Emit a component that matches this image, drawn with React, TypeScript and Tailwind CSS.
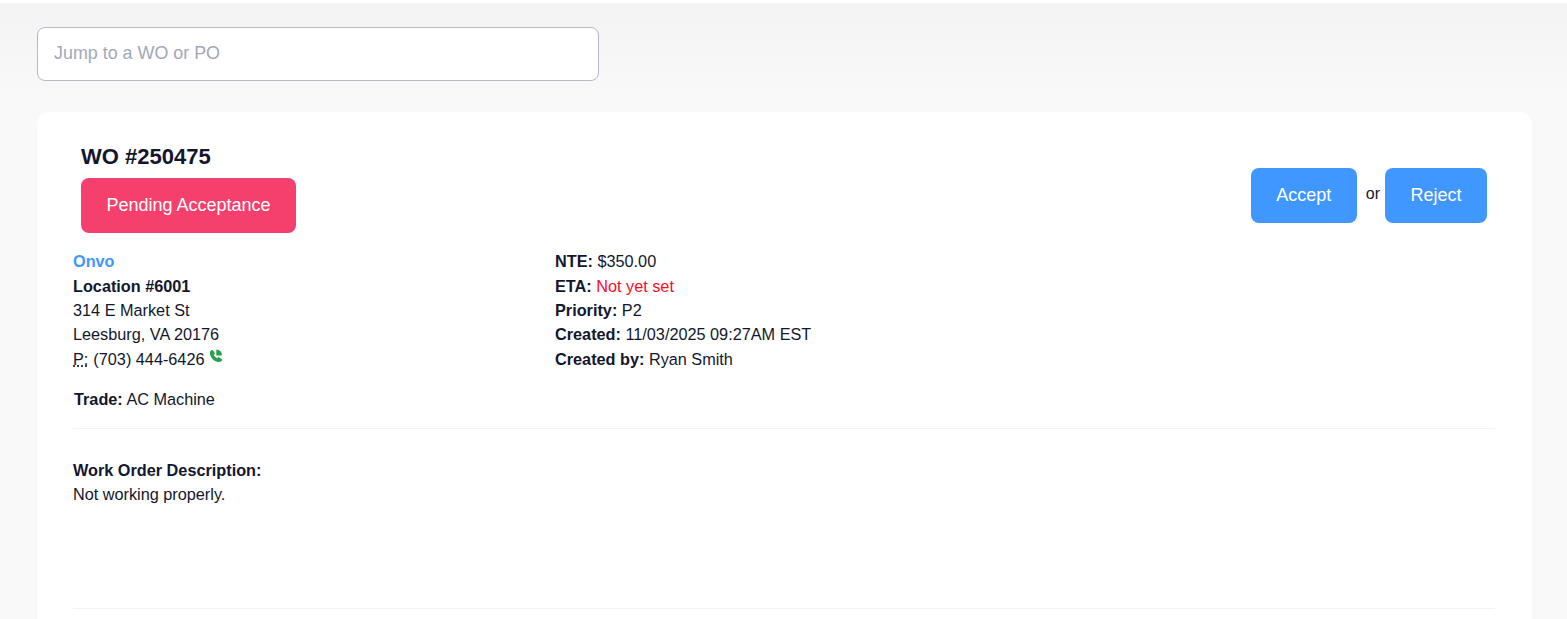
export default function App() {
  return (
    <div className="relative h-[619px] overflow-hidden bg-[#f9f9fa] font-['Liberation_Sans',Arial,sans-serif] text-[16.25px] leading-[24.375px] text-[#12172e]">
      <div className="h-[3px] bg-white" />
      <div className="h-[97px] bg-gradient-to-b from-[#f3f3f4] to-[#f9f9fa] pl-[37px] pt-6">
        <input
          placeholder="Jump to a WO or PO"
          className="h-[54px] w-[562px] rounded-lg border border-[#b8b8c8] bg-white px-4 pb-0.5 text-[17.9px] text-[#12172e] placeholder:text-[#a3a8b8]"
        />
      </div>
      <div className="ml-[37px] mr-[35px] mt-3 h-[600px] rounded-xl bg-white pl-9 pr-[37px] pt-[31px]">
        <div className="flex items-center justify-between pl-2 pr-2">
          <div>
            <h1 className="text-[22px] font-bold leading-[28px]">WO #250475</h1>
            <div className="mt-[7px] flex h-[55px] w-[215px] items-center justify-center rounded-lg bg-[#f53f6d] pb-0.5 text-lg text-white">
              Pending Acceptance
            </div>
          </div>
          <div className="mt-[15px] flex items-center">
            <button className="h-[55px] w-[106px] rounded-lg bg-[#3f97ff] pb-0.5 text-lg text-white">Accept</button>
            <span className="ml-[9px] mr-[5px] -mt-[3px] text-base">or</span>
            <button className="h-[55px] w-[102px] rounded-lg bg-[#3f97ff] pb-0.5 text-lg text-white">Reject</button>
          </div>
        </div>
        <div className="mt-[16.25px] flex">
          <div className="w-[482px]">
            <div className="font-bold text-[#3f97ff]">Onvo</div>
            <div className="font-bold">Location #6001</div>
            <div>314 E Market St</div>
            <div>Leesburg, VA 20176</div>
            <div className="flex items-start">
              <span className="underline decoration-dotted">P:</span>
              <span className="ml-[5px]">(703) 444-6426</span>
              <svg viewBox="0 0 24 24" className="ml-[5px] mt-[2px] h-[14px] w-[14px] fill-[#28a04a]">
                <path d="M6.600 2.200 9.900 6.900c.3.5.2 1.100-.2 1.500L8.100 10c1 2.600 3.100 4.800 5.900 5.900l1.600-1.600c.4-.4 1-.5 1.500-.2l5.200 3.300c.6.300.8 1 .5 1.600-1 2-3.500 3.400-5.700 3.400C9.300 22.400 1.600 14.700 1.600 6.900c0-2.100 1.200-4 3.300-5.100.6-.3 1.300-.1 1.700.4Z" />
                <path d="M12.500 1A10 10 0 0 1 22.500 11h-10Z" />
              </svg>
            </div>
          </div>
          <div>
            <div><b>NTE:</b> $350.00</div>
            <div><b>ETA:</b> <span className="text-[#fb0a2a]">Not yet set</span></div>
            <div><b>Priority:</b> P2</div>
            <div><b>Created:</b> 11/03/2025 09:27AM EST</div>
            <div><b>Created by:</b> Ryan Smith</div>
          </div>
        </div>
        <div className="ml-px mt-[15.75px]"><b>Trade:</b> AC Machine</div>
        <hr className="mt-[17px] border-[#f1f2f4]" />
        <div className="mt-[29px] font-bold leading-[24px]">Work Order Description:</div>
        <div className="leading-[24px]">Not working properly.</div>
        <hr className="mt-[102px] border-[#f1f2f4]" />
      </div>
    </div>
  );
}
